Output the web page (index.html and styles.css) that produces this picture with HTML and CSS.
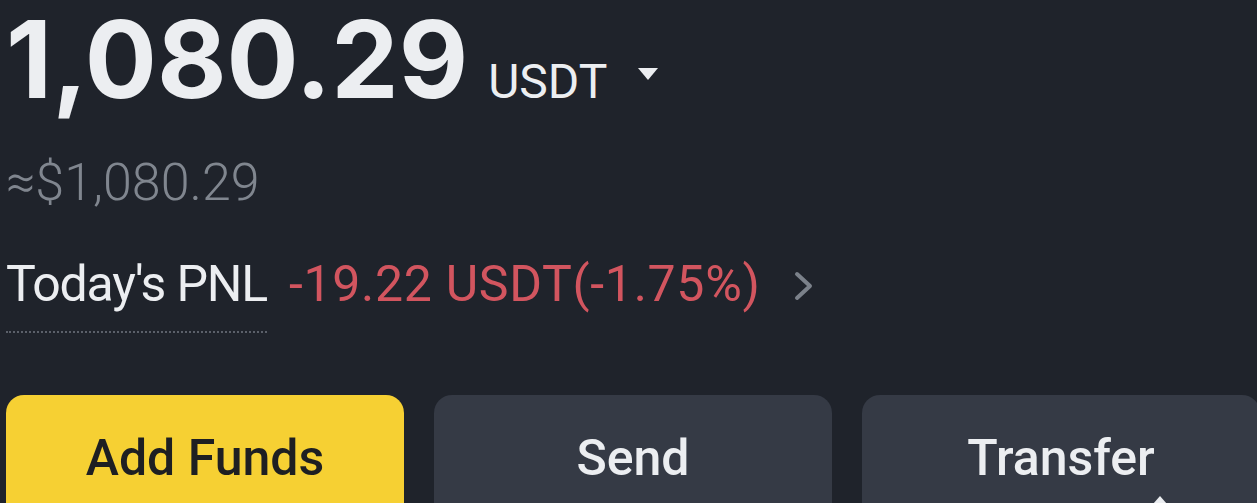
FILE: index.html
```html
<!DOCTYPE html>
<html lang="en">
<head>
  <meta charset="UTF-8" />
  <meta name="viewport" content="width=device-width, initial-scale=1.0"/>
  <title>Wallet Overview</title>
  <link rel="stylesheet" href="styles.css">
</head>
<body>

  <div class="wallet">
    <div class="balance-row">
      <span class="balance">1,080.29</span>
      <span class="unit">USDT</span>
      <svg class="caret" width="22" height="14" viewBox="0 0 22 14">
        <path d="M1 1 H21 L11 13 Z" fill="#eceef1"/>
      </svg>
    </div>

    <div class="fiat">≈$1,080.29</div>

    <div class="pnl-row">
      <span class="pnl-label">Today's PNL</span>
      <span class="pnl-value">-19.22 USDT(-1.75%)</span>
      <svg class="chevron" width="20" height="30" viewBox="0 0 20 30">
        <path d="M3 3 L16 15 L3 27" fill="none" stroke="#7b818a" stroke-width="4" stroke-linecap="round" stroke-linejoin="round"/>
      </svg>
    </div>

    <div class="actions">
      <button class="btn primary">Add Funds</button>
      <button class="btn">Send</button>
      <button class="btn">Transfer
        <svg class="btn-mark" width="16" height="10" viewBox="0 0 16 10">
          <path d="M8 1 L15 9 H1 Z" fill="#eceef1"/>
        </svg>
      </button>
    </div>
  </div>

</body>
</html>
```

FILE: styles.css
```css
html, body {
  margin: 0;
  height: 100%;
  overflow: hidden;
}

body {
  background-color: #1f232b;
  font-family: Roboto, "Liberation Sans", sans-serif;
  color: #eceef1;
}

.wallet {
  padding: 0 0 0 6px;
}

.balance-row {
  display: flex;
  align-items: baseline;
  height: 118px;
}

.balance {
  font-family: Inter, Roboto, sans-serif;
  font-weight: 700;
  font-size: 107px;
  line-height: 118px;
}

.unit {
  font-size: 48px;
  margin-left: 20px;
}

.caret {
  align-self: flex-start;
  margin: 67px 0 0 30px;
}

.fiat {
  margin-top: 34px;
  font-size: 52px;
  font-weight: 300;
  line-height: 62px;
  color: #80868f;
}

.pnl-row {
  display: flex;
  align-items: baseline;
  margin-top: 40px;
  font-size: 50px;
  line-height: 60px;
}

.pnl-label {
  color: #eceef1;
  letter-spacing: -1.2px;
  border-bottom: 2px dotted #5b606a;
  padding-bottom: 17px;
}

.pnl-value {
  color: #d2555f;
  letter-spacing: 0.7px;
  margin-left: 22px;
}

.chevron {
  margin-left: 33px;
}

.actions {
  display: grid;
  grid-template-columns: repeat(3, 398px);
  gap: 30px;
  margin-top: 62px;
}

.btn {
  position: relative;
  display: flex;
  justify-content: center;
  align-items: flex-start;
  height: 140px;
  padding: 33px 0 0;
  border: none;
  border-radius: 18px;
  background-color: #353a45;
  color: #eceef1;
  font-family: Roboto, "Noto Sans", sans-serif;
  font-size: 50px;
  font-weight: 500;
  line-height: 60px;
}

.btn.primary {
  background-color: #f6d033;
  color: #1e1f22;
}

.btn-mark {
  position: absolute;
  left: 290px;
  top: 100px;
}
```
